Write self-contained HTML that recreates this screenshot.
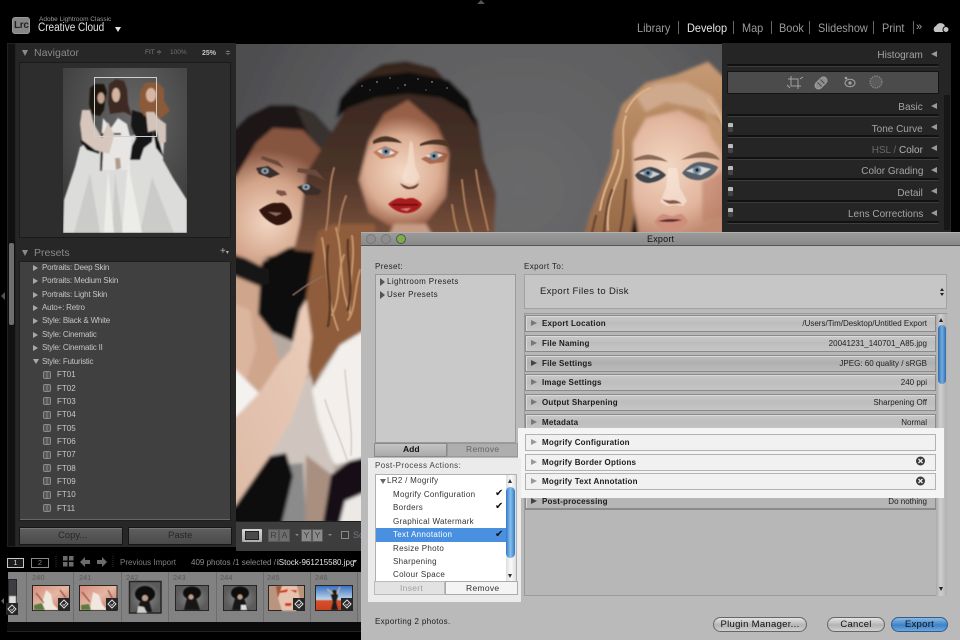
<!DOCTYPE html>
<html lang="en"><head><meta charset="utf-8"><title>Lightroom Classic Export</title>
<style>
*{box-sizing:border-box}
html,body{margin:0;padding:0;background:#000}
body{width:960px;height:640px;position:relative;overflow:hidden;font-family:"Liberation Sans",sans-serif}
.a,.t{position:absolute}
.t{white-space:nowrap;line-height:1}
svg{position:absolute;left:0;top:0}
.mod{font-size:12px;color:#9b9b9b;top:22px;transform:scaleX(.91);transform-origin:0 0}
.sep{position:absolute;width:1px;height:13px;top:21px;background:#666}
.ph{font-size:10.5px;color:#a4a4a4;right:37px;transform:scaleX(.95);transform-origin:100% 0}
.tri{position:absolute;width:0;height:0;border-top:3.5px solid transparent;border-bottom:3.5px solid transparent;border-right:6px solid #9a9a9a;left:931px}
.rsep{position:absolute;left:727px;width:212px;height:3px;background:#111;border-bottom:1px solid #3c3c3c;border-radius:2px}
.sw{position:absolute;left:728px;width:5px;height:9px;background:linear-gradient(#bbb 0 45%,#444 45%);border-radius:1px}
.pr{font-size:8px;color:#c4c4c4;left:42px;letter-spacing:-.2px}
.ar{position:absolute;left:33px;width:0;height:0;border-top:3px solid transparent;border-bottom:3px solid transparent;border-left:5px solid #aaa}
.ft{font-size:8px;color:#c8c8c8;left:57px}
.ic{position:absolute;left:43px;width:8px;height:8px;border:1px solid #8a8a8a;border-radius:2px;background:linear-gradient(90deg,#555 0 40%,#888 40% 55%,#555 55%)}
.cell{position:absolute;top:572px;height:50px;width:1px;background:#6d6d6d}
.num{position:absolute;top:574px;font-size:7.5px;color:#595959;line-height:1}
.dlg{position:absolute;left:361px;top:232px;width:599px;height:408px;background:#bababa}
.row{position:absolute;left:525px;width:411px;height:17px;background:linear-gradient(#c9c9c9,#bdbdbd 45%,#c5c5c5);border:1px solid #8a8a8a;box-shadow:inset 1px 1px 0 #dadada}
.row.w{background:#f1f1f1;border-color:#b2b2b2;box-shadow:none}
.rt{position:absolute;left:531px;width:0;height:0;border-top:3.5px solid transparent;border-bottom:3.5px solid transparent;border-left:6px solid #777}
.rl{font-size:8px;font-weight:bold;color:#1c1c1c;left:542px;letter-spacing:.2px}
.rv{font-size:8px;color:#222;right:33px}
.dt{font-size:8px;color:#222;letter-spacing:.4px}
.pp{font-size:8px;color:#333;left:393px;letter-spacing:.3px}
.chk{position:absolute;left:495px;font-size:10px;color:#111;line-height:1;font-family:"DejaVu Sans",sans-serif}
.btn{position:absolute;height:15px;top:617px;border:1px solid #666;border-radius:8px;background:linear-gradient(#e4e4e4,#b4b4b4 55%,#d0d0d0);text-align:center;font-size:9.5px;line-height:13px;color:#111;letter-spacing:.3px}
.bx{position:absolute;top:529px;width:11px;height:13px;border:1px solid #5a5a5a;font-size:8.5px;text-align:center;line-height:11px;color:#3e3e3e}
</style></head><body>

<!-- top bar -->
<div class="a" style="left:477px;top:0;width:0;height:0;border-left:4px solid transparent;border-right:4px solid transparent;border-bottom:4px solid #555"></div>
<div class="a" style="left:12px;top:17px;width:18px;height:17px;background:#868686;border-radius:3px;border:1px solid #999"></div>
<span class="t" style="left:14px;top:21px;font-size:10px;color:#222;font-weight:bold;letter-spacing:-.3px">Lrc</span>
<span class="t" style="left:39px;top:17px;font-size:6.5px;color:#9a9a9a">Adobe Lightroom Classic</span>
<span class="t" style="left:38px;top:23px;font-size:11.5px;color:#e2e2e2;transform:scaleX(.87);transform-origin:0 0">Creative Cloud</span>
<div class="a" style="left:115px;top:27px;width:0;height:0;border-left:3px solid transparent;border-right:3px solid transparent;border-top:5px solid #e4e4e4"></div>
<span class="t mod" style="left:637px">Library</span><div class="sep" style="left:678px"></div>
<span class="t mod" style="left:687px;color:#e6e6e6">Develop</span><div class="sep" style="left:733px"></div>
<span class="t mod" style="left:742px">Map</span><div class="sep" style="left:771px"></div>
<span class="t mod" style="left:779px">Book</span><div class="sep" style="left:809px"></div>
<span class="t mod" style="left:818px">Slideshow</span><div class="sep" style="left:873px"></div>
<span class="t mod" style="left:882px">Print</span><div class="sep" style="left:913px"></div>
<span class="t" style="left:916px;top:22px;font-size:11px;color:#aaa">»</span>
<svg width="960" height="640" viewBox="0 0 960 640" style="z-index:1;pointer-events:none"><path d="M935 32h10a3 3 0 0 0 0-6 5 5 0 0 0-9 0 3.500 3.500 0 0 0-1 6z" fill="#c4c4c4"/><circle cx="946" cy="29.500" r="3" fill="#c4c4c4" stroke="#000"/></svg>

<!-- left panel -->
<div class="a" style="left:7px;top:43px;width:9px;height:504px;background:#111;border:1px solid #222"></div>
<div class="a" style="left:9px;top:243px;width:5px;height:82px;background:#6e6e6e;border-radius:2px"></div>
<div class="a" style="left:16px;top:43px;width:220px;height:504px;background:#272727"></div>
<div class="a" style="left:1px;top:292px;width:0;height:0;border-top:4px solid transparent;border-bottom:4px solid transparent;border-right:4px solid #555"></div>
<div class="a" style="left:22px;top:50px;width:0;height:0;border-left:3.500px solid transparent;border-right:3.500px solid transparent;border-top:6px solid #8a8a8a"></div>
<span class="t" style="left:34px;top:48px;font-size:10.5px;color:#8a8a8a">Navigator</span>
<span class="t" style="left:145px;top:50px;font-size:6.5px;color:#808080">FIT ≑</span>
<span class="t" style="left:170px;top:50px;font-size:6.5px;color:#737373">100%</span>
<span class="t" style="left:202px;top:50px;font-size:7px;color:#c6c6c6;font-weight:bold">25%</span>
<span class="t" style="left:225px;top:50px;font-size:7px;color:#a0a0a0">≑</span>
<div class="a" style="left:19px;top:62px;width:212px;height:176px;background:#2d2d2d;border:1px solid #1a1a1a"></div>
<svg width="960" height="640" viewBox="0 0 960 640">
<defs>
<radialGradient id="navbg" cx=".55" cy=".3" r=".7"><stop offset="0" stop-color="#676767"/><stop offset="1" stop-color="#3c3c3c"/></radialGradient>
<clipPath id="navc"><rect x="63" y="68" width="124" height="165"/></clipPath>
<filter id="b1"><feGaussianBlur stdDeviation=".55"/></filter>
<filter id="bn"><feGaussianBlur stdDeviation=".8"/></filter>
<filter id="b2"><feGaussianBlur stdDeviation="1.600"/></filter>
<filter id="b3"><feGaussianBlur stdDeviation="3"/></filter>
</defs>
<rect x="63" y="68" width="124" height="165" fill="url(#navbg)"/>
<g clip-path="url(#navc)"><g filter="url(#bn)">
<path d="M80 147l-5 20-11 33-1 33h124v-33l-14-22-10-18 1-20-20-6-30 4-25 4z" fill="#dcdcda"/>
<path d="M103 118l8 10 7-10 9 6 4 16-1 30-30 0 1-30z" fill="#e8e6e4"/>
<path d="M74 233l16-60 10 60zM112 233l3-60 8 60zM140 233l12-56 22 56z" fill="#cbcbc9"/>
<path d="M122 233l6-70 14 70zM104 233l4-64 6 64z" fill="#ecece8"/>
<path d="M81 130l15 10 5 6-2 8-12-4-6-8z" fill="#111"/>
<path d="M132 110l13 4 8 20-1 8-8 6-4 12-10 0 2-14 4-8-5-12z" fill="#131313"/>
<path d="M152 124l8 20 4 14-8-10z" fill="#111"/>
<path d="M101 133h20v2h-17l-2 36h-2z" fill="#111"/>
<path d="M90 88l5-4 9 0 3 8-2 10-1 8-4 6-9-2-2-10z" fill="#1a1310"/>
<path d="M109 84l7-5 8 2 3 8 1 15 4 12-8-4-14 2-2-12z" fill="#3e2a22"/>
<path d="M140 92l5-9 12-1 7 7 0 12 6 10-9 7-17-2-5-10z" fill="#8b5a38"/>
<ellipse cx="101" cy="98" rx="3.500" ry="5.500" fill="#c9a592"/><ellipse cx="116" cy="95" rx="4" ry="7" fill="#d5b4a0"/><ellipse cx="151" cy="95" rx="5" ry="7" fill="#d8b7a2"/>
<path d="M82 110h8l4 14 8 14 2-6 4-10 6 12-1 6-4 14-14-4-13-10-2-16z" fill="#d6c6bc"/>
<path d="M146 112l8 0 4 6 8 6 0 18-6 2-4-14-8 2z" fill="#d3c4ba"/>
<path d="M115 158l5 0 1 10-5 2z" fill="#b49a8a"/>
</g>
<rect x="94.500" y="77.500" width="62" height="59" fill="none" stroke="#cfcfcf" stroke-width="1"/>
</g>
</svg>

<span class="t" style="left:34px;top:248px;font-size:10.5px;color:#8a8a8a">Presets</span>
<div class="a" style="left:22px;top:250px;width:0;height:0;border-left:3.500px solid transparent;border-right:3.500px solid transparent;border-top:6px solid #8a8a8a"></div>
<span class="t" style="left:220px;top:247px;font-size:10px;color:#b0b0b0">+<span style="font-size:6px">▾</span></span>
<div class="a" style="left:19px;top:261px;width:212px;height:260px;background:#404040;border:1px solid #1e1e1e;overflow:hidden"></div>
<i class="ar" style="top:265px"></i><span class="t pr" style="top:264px">Portraits: Deep Skin</span>
<i class="ar" style="top:278px"></i><span class="t pr" style="top:277px">Portraits: Medium Skin</span>
<i class="ar" style="top:292px"></i><span class="t pr" style="top:291px">Portraits: Light Skin</span>
<i class="ar" style="top:305px"></i><span class="t pr" style="top:304px">Auto+: Retro</span>
<i class="ar" style="top:318px"></i><span class="t pr" style="top:317px">Style: Black &amp; White</span>
<i class="ar" style="top:332px"></i><span class="t pr" style="top:331px">Style: Cinematic</span>
<i class="ar" style="top:345px"></i><span class="t pr" style="top:344px">Style: Cinematic II</span>
<div class="a" style="left:33px;top:359px;width:0;height:0;border-left:3px solid transparent;border-right:3px solid transparent;border-top:5px solid #aaa"></div><span class="t pr" style="top:358px">Style: Futuristic</span>
<i class="ic" style="top:371px"></i><span class="t ft" style="top:371px">FT01</span>
<i class="ic" style="top:384px"></i><span class="t ft" style="top:385px">FT02</span>
<i class="ic" style="top:397px"></i><span class="t ft" style="top:398px">FT03</span>
<i class="ic" style="top:411px"></i><span class="t ft" style="top:411px">FT04</span>
<i class="ic" style="top:424px"></i><span class="t ft" style="top:425px">FT05</span>
<i class="ic" style="top:437px"></i><span class="t ft" style="top:438px">FT06</span>
<i class="ic" style="top:451px"></i><span class="t ft" style="top:451px">FT07</span>
<i class="ic" style="top:464px"></i><span class="t ft" style="top:465px">FT08</span>
<i class="ic" style="top:477px"></i><span class="t ft" style="top:478px">FT09</span>
<i class="ic" style="top:491px"></i><span class="t ft" style="top:491px">FT10</span>
<i class="ic" style="top:504px"></i><span class="t ft" style="top:505px">FT11</span>
<div class="a" style="left:20px;top:519px;width:210px;height:1px;background:#666"></div>
<div class="a" style="left:19px;top:527px;width:104px;height:18px;background:linear-gradient(#5f5f5f,#4a4a4a);border:1px solid #161616;box-shadow:inset 0 1px 0 #777"></div>
<div class="a" style="left:128px;top:527px;width:104px;height:18px;background:linear-gradient(#5f5f5f,#4a4a4a);border:1px solid #161616;box-shadow:inset 0 1px 0 #777"></div>
<span class="t" style="left:58px;top:531px;font-size:9.5px;color:#262626">Copy...</span>
<span class="t" style="left:168px;top:531px;font-size:9.5px;color:#262626">Paste</span>

<!-- right panel -->
<div class="a" style="left:722px;top:43px;width:229px;height:200px;background:#252525"></div>
<div class="a" style="left:944px;top:45px;width:6px;height:185px;background:#171717"></div>
<div class="a" style="left:944px;top:45px;width:6px;height:50px;background:#252525"></div>
<span class="t ph" style="top:50px">Histogram</span><i class="tri" style="top:51px"></i>
<div class="rsep" style="top:64px"></div>
<div class="a" style="left:727px;top:71px;width:212px;height:23px;background:#4b4b4b;border:1px solid #141414"></div>
<svg width="960" height="640" viewBox="0 0 960 640" fill="none" stroke="#a2a2a2" stroke-width="1">
<path d="M791 76v10h10M788 79h10v10M800 79l3-2M787 85l3 3"/>
<g transform="rotate(-45 821 83)"><rect x="814" y="79.500" width="14" height="7" rx="3.500" fill="#8d8d8d"/><path d="M819 80v6M823 80v6" stroke="#4b4b4b"/></g>
<ellipse cx="850" cy="83" rx="5" ry="3.800"/><circle cx="850" cy="83" r="1.600" fill="#a2a2a2" stroke="none"/><circle cx="846" cy="78" r="1.300" fill="#a2a2a2" stroke="none"/>
<circle cx="876" cy="82" r="6" fill="#5b5b5b" stroke="#9a9a9a" stroke-dasharray="1.200 1.200"/>
</svg>
<span class="t ph" style="top:102px">Basic</span><i class="tri" style="top:103px"></i><div class="rsep" style="top:114px"></div>
<i class="sw" style="top:123px"></i><span class="t ph" style="top:124px">Tone Curve</span><i class="tri" style="top:124px"></i><div class="rsep" style="top:135px"></div>
<i class="sw" style="top:144px"></i><span class="t ph" style="top:145px"><span style="color:#6a6a6a">HSL /</span> <span style="color:#b4b4b4">Color</span></span><i class="tri" style="top:145px"></i><div class="rsep" style="top:157px"></div>
<i class="sw" style="top:166px"></i><span class="t ph" style="top:166px">Color Grading</span><i class="tri" style="top:167px"></i><div class="rsep" style="top:178px"></div>
<i class="sw" style="top:187px"></i><span class="t ph" style="top:188px">Detail</span><i class="tri" style="top:188px"></i><div class="rsep" style="top:200px"></div>
<i class="sw" style="top:208px"></i><span class="t ph" style="top:209px">Lens Corrections</span><i class="tri" style="top:210px"></i><div class="rsep" style="top:221px"></div>

<!-- photo -->
<svg width="960" height="640" viewBox="0 0 960 640">
<defs>
<clipPath id="ph"><rect x="236" y="44" width="486" height="477"/></clipPath>
<radialGradient id="bg" gradientUnits="userSpaceOnUse" cx="520" cy="190" r="300"><stop offset="0" stop-color="#69696b"/><stop offset=".6" stop-color="#5f5f61"/><stop offset="1" stop-color="#4d4d4f"/></radialGradient>
<radialGradient id="sk1" gradientUnits="userSpaceOnUse" cx="402" cy="172" r="56"><stop offset="0" stop-color="#f2d8c4"/><stop offset=".65" stop-color="#dcae94"/><stop offset="1" stop-color="#965e46"/></radialGradient>
<radialGradient id="sk2" gradientUnits="userSpaceOnUse" cx="268" cy="222" r="72"><stop offset="0" stop-color="#f2d6c2"/><stop offset=".6" stop-color="#d2a288"/><stop offset="1" stop-color="#865440"/></radialGradient>
<radialGradient id="sk3" gradientUnits="userSpaceOnUse" cx="668" cy="165" r="72"><stop offset="0" stop-color="#f2d6c2"/><stop offset=".65" stop-color="#e2b69e"/><stop offset="1" stop-color="#c08a70"/></radialGradient>
<linearGradient id="hrC" x1="0" y1="0" x2="0" y2="1"><stop offset="0" stop-color="#35251e"/><stop offset=".55" stop-color="#4a3228"/><stop offset="1" stop-color="#84583f"/></linearGradient>
<linearGradient id="hrR" x1="0" y1="0" x2="0" y2="1"><stop offset="0" stop-color="#c69a74"/><stop offset=".5" stop-color="#ad7f58"/><stop offset="1" stop-color="#946746"/></linearGradient>
<linearGradient id="arm" x1="0" y1="1" x2="1" y2="0"><stop offset="0" stop-color="#dcb9a5"/><stop offset="1" stop-color="#ecd0bd"/></linearGradient>
</defs>
<g clip-path="url(#ph)">
<g filter="url(#b2)">
<rect x="190" y="0" width="580" height="570" fill="url(#bg)"/>
<!-- lower base -->
<rect x="225" y="232" width="150" height="300" fill="#b8aaa0"/>
<!-- left woman hair -->
<path d="M225 130l11-2 12-12 22-11 24 0 20 8 18 20 8 24-4 30-4 40-10 24-10 60-30-20-20-30-37-20z" fill="#1d1512"/>
<path d="M296 108l18 6 18 20-3 26-16-16z" fill="#38302e"/>
<!-- left face+neck -->
<path d="M225 177l11 0 20-34 17-15 30 2 21 23 2 37-6 32-10 18-20 12-28 6-37 0z" fill="url(#sk2)"/>
<!-- chest skin -->
<path d="M225 258l45 0 10 12-14 30 0 20 9 25 5 17-21 31-23-23-11 0z" fill="#cfa58c"/>
<path d="M225 300l25 10 6 40 -10 30-21-20z" fill="#dcb59e"/>
<!-- dark under hair -->
<path d="M262 262l26-14 40-8 8 40-8 40-14 28-20 -6-22-10-14-18 2-30z" fill="#110c0b"/>
<!-- choker -->
<path d="M225 252l20 6 24 12 0 14-10 2-34-14z" fill="#161213"/>
<!-- strap -->
<path d="M225 362l11 8 23 23-23 24-11 5z" fill="#f4f2ef"/>
<!-- under-arm dress -->
<path d="M256 440l40-50 20-20 10 50 10 60-2 60h-78z" fill="#cfc5be"/>
<path d="M279 465l24 -2 4 70h-32z" fill="#8b8b8b"/>
<path d="M306 455l26 20 3 60h-30z" fill="#a98f80"/>
<!-- lace -->
<path d="M375 322l-35 23-18 30-10 15 6 30 12 35 5 10 40-10z" fill="#f2efec"/>
<path d="M375 485l-40 4-4 45h44z" fill="#ede9e6"/>
<!-- ribbon -->
<path d="M375 455l-26 6-18 14-8 48 16 2 6-24 14-6 16-8z" fill="#121114"/>
<!-- sash -->
<path d="M225 518l45-62 16-3 7 23-13 55h-55z" fill="#0d0c0d"/>
<!-- arm & hand -->
<path d="M225 428l11-11 23-24 20-30 12-13 9-40 12-20 16-13-2 23-3 43-14 27-16 47-24 40-33 48-11 8z" fill="url(#arm)"/>
<!-- center hair back -->
<path d="M344 112l12-32 26-16 24-3 28 7 22 22 22 30 6 40 12 34-2 40-30 20-110 2-60-6 6-26 6-50z" fill="url(#hrC)"/>
<!-- red hair lower left -->
<path d="M318 232l14-8 43 0 0 100-35 21-20 28-6 14-6-20 4-30-6-40z" fill="#8f5d3a"/>
<!-- center face -->
<path d="M408 100l-24 14-15 26-10 40 10 33 27 17 27-3 23-30 3-44-12-28z" fill="url(#sk1)"/>
<path d="M394 224l32 0 8 14h-46z" fill="#c69c84"/>
<!-- headband -->
<path d="M336 119l4-20 12-14 17-8 40-5 40 8 20 20 9 29-13-18-23-13-34-4-33 4-27 10z" fill="#0c0b0d"/>
<!-- right woman hair -->
<path d="M676 75l-30 8-24 22-8 25-2 30-10 26-12 28-8 30 150 2v-160l-24-24z" fill="url(#hrR)"/>
<path d="M636 96l20-12 30-2 26 14 14 24-30-12-30-6-20 10z" fill="#cfa98c"/>
<path d="M636 208l10 30h-16z" fill="#0f0d0c"/>
<!-- right face -->
<path d="M633 142l13-24 33-8 37 18 10 14v96h-87l-6-40z" fill="url(#sk3)"/>
<path d="M702 182l24-12v44l-24 8z" fill="#bd7f68" opacity=".6"/>
<path d="M702 108l24 20v30l-14-20z" fill="#c59a72"/>
</g>
<!-- strands -->
<g fill="none" filter="url(#b1)" stroke-linecap="round">
<g stroke="#c4946a" stroke-width="2">
<path d="M322 238c6 30 4 60 16 92M336 228c8 30 2 55 14 85M352 236c4 25-4 45-2 80M344 255c-8 20-2 40-12 60M360 270c-6 20-4 40-12 50"/>
</g>
<g stroke="#5d3a28" stroke-width="2.500">
<path d="M328 246c-4 30 6 50 0 80M348 240c-2 20 6 40 0 70"/>
</g>
<g stroke="#ab7a58" stroke-width="2">
<path d="M334 168c-6 20-4 40-8 62M346 196c-6 15-6 25-8 36M476 170c2 20 8 40 12 60M462 180c2 20 4 35 10 52M452 205c2 10 2 18 6 27"/>
</g>
<g stroke="#dcb48c" stroke-width="2">
<path d="M626 116c-6 15 0 30-4 50s-16 30-14 64M618 150c-2 20-14 35-18 60M708 100c8 8 12 16 15 26M650 88c-14 6-20 15-24 24"/>
</g>
<g stroke="#6e4a34" stroke-width="2.500">
<path d="M612 190c-6 15-6 25-8 42M626 180c-2 20-2 35-6 52M596 216c-2 6-2 10-4 16"/>
</g>
<g stroke="#d9cdc6" stroke-width="1.500"><path d="M325 400c6 20 16 40 22 60M345 370c2 30 8 55 6 85"/></g>
<path d="M293 295l14-10 16-9" stroke="#8a7064" stroke-width="1.500"/>
</g>
<!-- features -->
<g filter="url(#b1)">
<path d="M256 168l12-2 12 8-10 4-11-4z" fill="#3a2d2a"/><ellipse cx="265" cy="171" rx="3.800" ry="3" fill="#8a9eaa"/><circle cx="265" cy="171" r="1.300" fill="#111"/>
<path d="M297 187l11-4 14 8-4 4-12 0z" fill="#3a2f2c"/><ellipse cx="306" cy="187" rx="3.800" ry="3" fill="#8fa6b3"/><circle cx="306" cy="187" r="1.300" fill="#111"/>
<path d="M262 156l16 5 6 7-10-4-13-5zM298 168l18 2 9 10-12-5-16-3z" fill="#6b4a3c"/>
<path d="M277 190l8 1 2 4-6 1-5-3z" fill="#7c5545"/>
<path d="M259 210c6-4 12-8 18-7 3 0 5-1 8 1 4 3 7 8 7 14-4 4-10 8-16 7-8-3-14-9-17-15z" fill="#33140f"/><path d="M268 212l14 1-6 3z" fill="#8a6b64"/>
<!-- center features -->
<path d="M373 141c5-4 12-6 17-4 5 1 9 3 12 6-8-1-18-3-29 1z" fill="#4c3428"/>
<path d="M420 144c8-4 18-6 27-3 2 2 3 4 3 6-10-3-20-4-30-1z" fill="#4c3428"/>
<path d="M373 152l12-6 14 6-5 5-13 2z" fill="#b56a4c" opacity=".8"/><path d="M377 151l9-3 9 5-9 3z" fill="#efe9e4"/>
<ellipse cx="386" cy="151.500" rx="4.300" ry="4" fill="#7b93a6"/><circle cx="386" cy="151.500" r="1.800" fill="#111"/>
<path d="M421 159l14-8 14 3-5 8-14 2z" fill="#9a583e" opacity=".8"/><path d="M425 156l10-3 8 2-8 4z" fill="#ebe6e2"/>
<ellipse cx="434" cy="156" rx="4.300" ry="3.800" fill="#7d95a6"/><circle cx="434" cy="156" r="1.700" fill="#111"/>
<path d="M410 140l-3 24-6 14 4 5 9 1 6-6-5-12-2-22z" fill="#f6e4d6" opacity=".6"/>
<path d="M400 183c3 2 6 3 9 4 4 0 7-2 10-4-1 3-3 6-8 6-5 1-9-2-11-6z" fill="#6b3c2e"/>
<path d="M388 204c4-3 8-6 12-6 3 0 4 1 6 1 2-1 5-1 7-1 4 1 7 4 9 6-2 5-7 8-13 9-8 1-16-3-21-9z" fill="#ab1a1e"/><path d="M392 204h26v1.500h-26z" fill="#590b10"/><path d="M400 209l11-1-4 3z" fill="#d98286"/>
<!-- right features -->
<path d="M634 159c6-3 12-5 17-4 6 1 12 3 17 7-8-2-20-4-34-1z" fill="#8a6b55"/>
<path d="M681 160c8-5 18-9 26-8 5 1 10 3 13 8-12-3-26-3-39 0z" fill="#8a6b55"/>
<path d="M635 175c5-5 11-8 16-8 6 1 11 4 15 8-3 4-9 7-17 8-6 0-12-3-14-8z" fill="#3f444c"/>
<path d="M682 173c5-6 11-11 18-11 6 0 13 2 18 5-2 6-8 11-17 13-8 1-15-2-19-7z" fill="#565f68"/>
<path d="M639 173l10-3 11 4-9 4z" fill="#cfd2d2"/><ellipse cx="648" cy="173" rx="4.300" ry="3.800" fill="#6f8aa0"/><circle cx="648" cy="173" r="1.700" fill="#111"/>
<path d="M686 171l12-5 13 3-10 6z" fill="#d5d9da"/><ellipse cx="697" cy="170" rx="4.300" ry="3.800" fill="#6f8aa0"/><circle cx="697" cy="170" r="1.700" fill="#111"/>
<path d="M668 168l-2 20-6 14 7 4 8-1 8 1 4-5-7-13-3-20z" fill="#f8ebdf" opacity=".6"/>
<path d="M662 199c3 3 6 5 9 5 4 0 8-1 11 0-3-3-6-4-10-4-3 1-7 0-10-1z" fill="#8d5444"/>
<path d="M654 222c3-4 6-7 9-8 3 0 6 2 9 2s6-2 9-2c3 1 5 4 7 8-3 3-6 6-9 7-4 2-8 3-12 2-5-1-10-5-13-9z" fill="#cf8e7c"/><path d="M658 221c4-1 8-2 12-2s8 0 12 1c-4 1-8 2-12 2s-8 0-12-1z" fill="#5e2e2a"/>
</g>
<g fill="#c8c8c8"><circle cx="362" cy="86" r=".6"/><circle cx="377" cy="82" r=".7"/><circle cx="390" cy="78" r=".6"/><circle cx="405" cy="85" r=".7"/><circle cx="418" cy="79" r=".6"/><circle cx="432" cy="82" r=".7"/><circle cx="447" cy="88" r=".6"/><circle cx="370" cy="90" r=".5"/><circle cx="398" cy="88" r=".5"/><circle cx="426" cy="90" r=".5"/></g>
</g>
</svg>

<!-- toolbar -->
<div class="a" style="left:236px;top:521px;width:125px;height:30px;background:#3d3d3d;border-top:1px solid #1d1d1d"></div>
<div class="a" style="left:242px;top:529px;width:20px;height:13px;background:linear-gradient(#d8d8d8,#aaa);border-radius:1px;padding:2px 3px"><div style="width:14px;height:9px;background:#4a4a4a;border:1px solid #222"></div></div>
<div class="bx" style="left:268px;background:#6e6e6e">R</div><div class="bx" style="left:279px;background:#6e6e6e">A</div>
<div class="a" style="left:295px;top:534px;border-left:2px solid transparent;border-right:2px solid transparent;border-top:2px solid #888"></div>
<div class="bx" style="left:301px;background:#8a8a8a">Y</div><div class="bx" style="left:312px;background:#8a8a8a">Y</div>
<div class="a" style="left:328px;top:534px;border-left:2px solid transparent;border-right:2px solid transparent;border-top:2px solid #888"></div>
<div class="a" style="left:341px;top:531px;width:8px;height:8px;border:1px solid #8a8a8a;background:#3a3a3a"></div>
<span class="t" style="left:353px;top:531px;font-size:9px;color:#778">So</span>

<!-- filmstrip nav -->
<div class="a" style="left:7px;top:558px;width:17px;height:10px;border:1px solid #c8c8c8;background:#1b1b1b;color:#ddd;font-size:7.5px;text-align:center;line-height:8px">1</div>
<div class="a" style="left:31px;top:558px;width:18px;height:10px;border:1px solid #8a8a8a;color:#888;font-size:7.5px;text-align:center;line-height:8px">2</div>
<svg width="960" height="640" viewBox="0 0 960 640">
<g fill="#6c6c6c"><rect x="63" y="556" width="4.500" height="4.500"/><rect x="69" y="556" width="4.500" height="4.500"/><rect x="63" y="562" width="4.500" height="4.500"/><rect x="69" y="562" width="4.500" height="4.500"/>
<path d="M80 562l5-5v3h5v4h-5v3zM107 562l-5-5v3h-5v4h5v3z"/></g>
<path d="M56 556v12M113 556v12" stroke="#2f2f2f" stroke-dasharray="1 1"/>
</svg>
<span class="t" style="left:120px;top:559px;font-size:8px;color:#7c7c82">Previous Import</span>
<span class="t" style="left:191px;top:559px;font-size:8px;color:#8c8c8c">409 photos /1 selected /</span>
<span class="t" style="left:277px;top:559px;font-size:8px;color:#e4e4e4">iStock-961215580.jpg</span>
<div class="a" style="left:353px;top:560px;border-left:2.500px solid transparent;border-right:2.500px solid transparent;border-top:3px solid #aaa"></div>

<!-- filmstrip -->
<div class="a" style="left:8px;top:572px;width:353px;height:50px;background:#828282"></div>
<div class="a" style="left:7px;top:622px;width:354px;height:10px;background:#0a0a0a;border-bottom:1px solid #222"></div>
<div class="a" style="left:1px;top:598px;width:0;height:0;border-top:3px solid transparent;border-bottom:3px solid transparent;border-right:3px solid #666"></div>
<i class="cell" style="left:26px"></i><i class="cell" style="left:73px"></i><i class="cell" style="left:121px"></i><i class="cell" style="left:168px"></i><i class="cell" style="left:216px"></i><i class="cell" style="left:263px"></i><i class="cell" style="left:310px"></i><i class="cell" style="left:357px"></i>
<span class="num" style="left:32px">240</span><span class="num" style="left:79px">241</span><span class="num" style="left:126px">242</span><span class="num" style="left:173px">243</span><span class="num" style="left:220px">244</span><span class="num" style="left:267px">245</span><span class="num" style="left:315px">246</span>
<svg width="960" height="640" viewBox="0 0 960 640">
<defs>
<linearGradient id="pk" x1="0" y1="0" x2="1" y2="1"><stop offset="0" stop-color="#d78b7c"/><stop offset=".5" stop-color="#e5b7a4"/><stop offset="1" stop-color="#b76a5c"/></linearGradient>
<radialGradient id="gy"><stop offset="0" stop-color="#8c8c8c"/><stop offset="1" stop-color="#5a5a5a"/></radialGradient>
<linearGradient id="sky" x1="0" y1="0" x2="0" y2="1"><stop offset="0" stop-color="#356fc0"/><stop offset=".55" stop-color="#bcd4ea"/><stop offset=".62" stop-color="#d8502a"/><stop offset="1" stop-color="#c8401f"/></linearGradient>
<g id="bdg"><rect x="-6" y="-6" width="12" height="12" fill="#262626"/><path d="M0-4l4 4-4 4-4-4z" fill="none" stroke="#ddd"/><path d="M-1.500 0l1.500 1.500L2-1" fill="none" stroke="#ddd" stroke-width=".7"/></g>
</defs>
<g stroke="#262626" stroke-width="1">
<rect x="8.500" y="579.500" width="8" height="35" fill="#3d3d44"/>
<rect x="32.500" y="585.500" width="37" height="25" fill="url(#pk)"/>
<rect x="79.500" y="585.500" width="37.500" height="25" fill="url(#pk)"/>
<rect x="129.500" y="581.500" width="31.500" height="31.500" fill="url(#gy)" stroke-width="1.500"/>
<rect x="175.500" y="585.500" width="33" height="25" fill="url(#gy)"/>
<rect x="223.500" y="585.500" width="33" height="25" fill="url(#gy)"/>
<rect x="268.500" y="585.500" width="36" height="25" fill="#bb947f"/>
<rect x="315.500" y="585.500" width="37" height="25" fill="url(#sky)"/>
</g>
<g filter="url(#b1)">
<rect x="9" y="596" width="7" height="14" fill="#ddd"/>
<path d="M46 590l5 4 2 10 6 6H40z" fill="#efe8df"/><path d="M34 605l8-2 3 7H34z" fill="#5d7a40"/><path d="M36 593l8 10M60 590l6 8" stroke="#8d4c40" stroke-width="1.200"/>
<path d="M93 592l6 3 3 9 5 6H90z" fill="#f0e8e0"/><path d="M81 605l8-1 2 6H81z" fill="#5d7a40"/><path d="M82 592l8 10M108 590l5 10" stroke="#8d4c40" stroke-width="1.200"/>
<ellipse cx="145" cy="594" rx="10" ry="8" fill="#0a0a0a"/><path d="M141 600h8l3 12h-16z" fill="#141414"/><ellipse cx="145" cy="598" rx="3" ry="3" fill="#c09c8a"/><path d="M138 606l6 1 3 6h-10z" fill="#d0ccc8"/>
<ellipse cx="192" cy="593" rx="9" ry="6.500" fill="#0a0a0a"/><path d="M187 598h9l4 12h-16z" fill="#141414"/><ellipse cx="191" cy="597" rx="2.500" ry="2.500" fill="#c09c8a"/>
<ellipse cx="240" cy="593" rx="9" ry="6.500" fill="#0a0a0a"/><path d="M235 598h9l4 12h-16z" fill="#141414"/><ellipse cx="240" cy="597" rx="2.500" ry="2.500" fill="#c09c8a"/><path d="M241 605h5l1 5h-6z" fill="#ddd"/>
<path d="M281 586h16l3 13-4 12h-14l-4-13z" fill="#e6c3ae"/><path d="M280 591l8-2-1 3-7 1zM290 590l7 0-1 3z" fill="#d4361e"/><path d="M285 603h7l-1 3h-6z" fill="#d4361e"/><path d="M276 586h6l-4 12z" fill="#a0583a"/>
<path d="M333 590l-2 5 2 7-2 8h7l-2-8 2-6-2-6z" fill="#1b1b1b"/><path d="M327 589l6 5M340 587l-3 7" stroke="#e0b8a0" stroke-width="1.200"/>
</g>
<use href="#bdg" x="64" y="604"/><use href="#bdg" x="112" y="604"/><use href="#bdg" x="299" y="604"/><use href="#bdg" x="347" y="604"/><use href="#bdg" x="12" y="609"/>
</svg>

<!-- dialog -->
<div class="dlg"></div>
<div class="a" style="left:361px;top:232px;width:599px;height:14px;background:linear-gradient(#9a9a9a,#8a8a8a);border-top:1px solid #b0b0b0;border-bottom:1px solid #555"></div>
<div class="a" style="left:366px;top:234px;width:10px;height:10px;border-radius:50%;background:#8e8e8e;border:1px solid #787878"></div>
<div class="a" style="left:381px;top:234px;width:10px;height:10px;border-radius:50%;background:#8e8e8e;border:1px solid #787878"></div>
<div class="a" style="left:396px;top:234px;width:10px;height:10px;border-radius:50%;background:#7dac48;border:1px solid #555"></div>
<span class="t" style="left:647px;top:235px;font-size:9px;color:#111;letter-spacing:.2px">Export</span>

<span class="t dt" style="left:375px;top:263px">Preset:</span>
<div class="a" style="left:375px;top:274px;width:141px;height:169px;background:#c9c9c9;border:1px solid #9a9a9a"></div>
<div class="a" style="left:380px;top:278px;width:0;height:0;border-top:4px solid transparent;border-bottom:4px solid transparent;border-left:5px solid #555"></div>
<span class="t dt" style="left:387px;top:278px;color:#222">Lightroom Presets</span>
<div class="a" style="left:380px;top:291px;width:0;height:0;border-top:4px solid transparent;border-bottom:4px solid transparent;border-left:5px solid #555"></div>
<span class="t dt" style="left:387px;top:291px;color:#222">User Presets</span>
<div class="a" style="left:374px;top:443px;width:73px;height:14px;background:linear-gradient(#c4c4c4,#aaa);border:1px solid #8a8a8a"></div>
<div class="a" style="left:447px;top:443px;width:71px;height:14px;background:#aeaeae;border:1px solid #999"></div>
<span class="t" style="left:403px;top:445px;font-size:8.5px;font-weight:bold;color:#111">Add</span>
<span class="t" style="left:466px;top:445px;font-size:8.5px;color:#666;letter-spacing:.3px">Remove</span>

<span class="t dt" style="left:524px;top:263px">Export To:</span>
<div class="a" style="left:524px;top:274px;width:423px;height:35px;background:#c6c6c6;border:1px solid #a2a2a2"></div>
<span class="t" style="left:540px;top:287px;font-size:9.500px;color:#1d1d1d;letter-spacing:.35px">Export Files to Disk</span>
<div class="a" style="left:940px;top:288px;border-left:2.500px solid transparent;border-right:2.500px solid transparent;border-bottom:3px solid #222"></div>
<div class="a" style="left:940px;top:293px;border-left:2.500px solid transparent;border-right:2.500px solid transparent;border-top:3px solid #222"></div>

<div class="a" style="left:524px;top:313px;width:423px;height:283px;background:#b7b7b7;border:1px solid #9a9a9a"></div>
<div class="a" style="left:936px;top:314px;width:11px;height:282px;background:linear-gradient(90deg,#aaa,#cfcfcf 40%,#b0b0b0)"></div>
<div class="a" style="left:938px;top:325px;width:8px;height:59px;border-radius:4px;background:linear-gradient(90deg,#2d6cb0,#74acdf 50%,#2d6cb0)"></div>
<div class="a" style="left:939px;top:318px;border-left:2.500px solid transparent;border-right:2.500px solid transparent;border-bottom:4px solid #222"></div>
<div class="a" style="left:939px;top:587px;border-left:2.500px solid transparent;border-right:2.500px solid transparent;border-top:4px solid #222"></div>

<div class="row" style="top:315px"></div><i class="rt" style="top:320px"></i><span class="t rl" style="top:320px">Export Location</span><span class="t rv" style="top:320px">/Users/Tim/Desktop/Untitled Export</span>
<div class="row" style="top:335px"></div><i class="rt" style="top:340px"></i><span class="t rl" style="top:340px">File Naming</span><span class="t rv" style="top:340px">20041231_140701_A85.jpg</span>
<div class="row" style="top:355px;background:linear-gradient(#bdbdbd,#b0b0b0 45%,#bbb)"></div><i class="rt" style="top:360px;border-left-color:#444"></i><span class="t rl" style="top:360px">File Settings</span><span class="t rv" style="top:360px">JPEG: 60 quality / sRGB</span>
<div class="row" style="top:374px"></div><i class="rt" style="top:379px"></i><span class="t rl" style="top:379px">Image Settings</span><span class="t rv" style="top:379px">240 ppi</span>
<div class="row" style="top:394px"></div><i class="rt" style="top:399px"></i><span class="t rl" style="top:399px">Output Sharpening</span><span class="t rv" style="top:399px">Sharpening Off</span>
<div class="row" style="top:414px"></div><i class="rt" style="top:419px"></i><span class="t rl" style="top:419px">Metadata</span><span class="t rv" style="top:419px">Normal</span>
<div class="row" style="top:493px;background:#b6b6b6;border-bottom:2px solid #8a8a8a"></div><i class="rt" style="top:498px;border-left-color:#444"></i><span class="t rl" style="top:498px">Post-processing</span><span class="t rv" style="top:498px">Do nothing</span>

<!-- highlights -->
<div class="a" style="left:518px;top:428px;width:426px;height:70px;background:#f4f4f4"></div>
<div class="row w" style="top:434px"></div><i class="rt" style="top:439px;border-left-color:#999"></i><span class="t rl" style="top:439px">Mogrify Configuration</span>
<div class="row w" style="top:454px"></div><i class="rt" style="top:459px;border-left-color:#999"></i><span class="t rl" style="top:459px">Mogrify Border Options</span>
<div class="row w" style="top:473px"></div><i class="rt" style="top:478px;border-left-color:#999"></i><span class="t rl" style="top:478px">Mogrify Text Annotation</span>
<svg width="960" height="640" viewBox="0 0 960 640" style="z-index:2">
<circle cx="920.500" cy="461" r="4.500" fill="#3a3a3a"/><path d="M918.500 459l4 4m0-4l-4 4" stroke="#eee" stroke-width="1.300"/>
<circle cx="920.500" cy="481" r="4.500" fill="#3a3a3a"/><path d="M918.500 479l4 4m0-4l-4 4" stroke="#eee" stroke-width="1.300"/>
</svg>

<div class="a" style="left:368px;top:458px;width:153px;height:144px;background:#ebebeb"></div>
<span class="t dt" style="left:375px;top:462px;color:#444">Post-Process Actions:</span>
<div class="a" style="left:375px;top:474px;width:142px;height:108px;background:#fff;border:1px solid #b0b0b0"></div>
<div class="a" style="left:376px;top:528px;width:130px;height:14px;background:#4a90e0"></div>
<div class="a" style="left:506px;top:475px;width:10px;height:106px;background:linear-gradient(90deg,#ddd,#fafafa 50%,#ddd)"></div>
<div class="a" style="left:506px;top:487px;width:9px;height:71px;border-radius:4.500px;background:linear-gradient(90deg,#3079c6,#8abfee 50%,#3079c6)"></div>
<div class="a" style="left:508px;top:479px;border-left:2.500px solid transparent;border-right:2.500px solid transparent;border-bottom:4px solid #333"></div>
<div class="a" style="left:508px;top:574px;border-left:2.500px solid transparent;border-right:2.500px solid transparent;border-top:4px solid #333"></div>
<div class="a" style="left:380px;top:479px;border-left:3px solid transparent;border-right:3px solid transparent;border-top:5px solid #666"></div>
<span class="t pp" style="left:387px;top:477px">LR2 / Mogrify</span>
<span class="t pp" style="top:491px">Mogrify Configuration</span>
<span class="t pp" style="top:504px">Borders</span>
<span class="t pp" style="top:518px">Graphical Watermark</span>
<span class="t pp" style="top:531px;color:#fff">Text Annotation</span>
<span class="t pp" style="top:545px">Resize Photo</span>
<span class="t pp" style="top:558px">Sharpening</span>
<span class="t pp" style="top:571px">Colour Space</span>
<span class="chk" style="top:489px">✔</span><span class="chk" style="top:502px">✔</span><span class="chk" style="top:530px">✔</span>
<div class="a" style="left:374px;top:581px;width:71px;height:14px;background:#e2e2e2;border:1px solid #bbb"></div>
<div class="a" style="left:445px;top:581px;width:73px;height:14px;background:#f4f4f4;border:1px solid #aaa"></div>
<span class="t" style="left:400px;top:584px;font-size:8.5px;color:#a0a0a0;letter-spacing:.3px">Insert</span>
<span class="t" style="left:466px;top:584px;font-size:8.5px;color:#333;letter-spacing:.3px">Remove</span>

<span class="t" style="left:375px;top:618px;font-size:8px;color:#1d1d1d;letter-spacing:.35px">Exporting 2 photos.</span>
<div class="btn" style="left:713px;width:94px">Plugin Manager...</div>
<div class="btn" style="left:827px;width:58px">Cancel</div>
<div class="btn" style="left:891px;width:57px;background:linear-gradient(#8ab9e4,#3e82c8 55%,#6ea8dc);border-color:#335d88">Export</div>

</body></html>
